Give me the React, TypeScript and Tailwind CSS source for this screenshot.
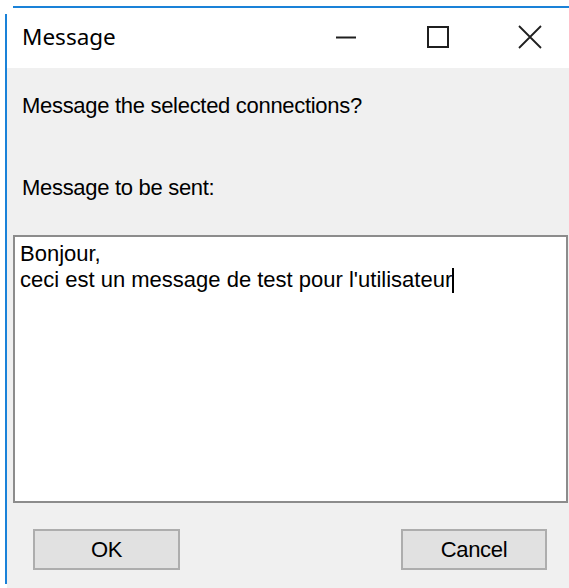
import React from "react";

const ACCENT = "bg-[#1a82d8]";

function MinimizeIcon() {
  return (
    <svg width="22" height="22" viewBox="0 0 22 22" fill="none">
      <path d="M1 11.5 H21" stroke="#1f1f1f" strokeWidth="2" />
    </svg>
  );
}

function MaximizeIcon() {
  return (
    <svg width="22" height="22" viewBox="0 0 22 22" fill="none">
      <rect x="1" y="1" width="20" height="20" stroke="#1f1f1f" strokeWidth="2" />
    </svg>
  );
}

function CloseIcon() {
  return (
    <svg width="24" height="24" viewBox="0 0 24 24" fill="none">
      <path d="M1 1 L23 23 M23 1 L1 23" stroke="#1f1f1f" strokeWidth="1.8" />
    </svg>
  );
}

function CaptionButton({ children }: { children: React.ReactNode }) {
  return <div className="w-[92px] h-[57px] flex items-center justify-center">{children}</div>;
}

function DialogButton({ label, className }: { label: string; className: string }) {
  return (
    <div
      className={
        "h-[41px] flex items-center justify-center bg-[#e1e1e1] border-2 border-[#adadad] text-[22px] leading-none tracking-[-0.3px] text-black " +
        className
      }
    >
      {label}
    </div>
  );
}

export default function App() {
  return (
    <div
      className="w-[569px] h-[588px] bg-white overflow-hidden flex flex-col"
      style={{ fontFamily: '"Liberation Sans", Arial, sans-serif' }}
    >
      <div className="h-[6px] shrink-0" />
      {/* window top edge */}
      <div className={"ml-[13px] h-[2px] shrink-0 " + ACCENT} />
      <div className="flex flex-1 min-h-0">
        {/* window left edge */}
        <div className={"ml-[5px] w-[2px] mt-[6px] mb-[4px] shrink-0 " + ACCENT} />
        <div className="w-[567px] shrink-0 flex flex-col">
          {/* title bar */}
          <div className="h-[60px] shrink-0 bg-white flex items-start justify-between">
            <div
              className="pl-[15px] pt-[18px] text-[22.5px] leading-none text-black"
              style={{ fontFamily: '"Noto Sans", "Open Sans", sans-serif' }}
            >
              Message
            </div>
            <div className="flex -mr-[2px]">
              <CaptionButton>
                <MinimizeIcon />
              </CaptionButton>
              <CaptionButton>
                <MaximizeIcon />
              </CaptionButton>
              <CaptionButton>
                <CloseIcon />
              </CaptionButton>
            </div>
          </div>
          {/* client area */}
          <div className="flex-1 bg-[#f0f0f0] flex flex-col text-black">
            <div className="pl-[15px] mt-[27px] text-[22px] leading-none tracking-[-0.3px]">
              Message the selected connections?
            </div>
            <div className="pl-[15px] mt-[60px] text-[22px] leading-none tracking-[-0.3px]">
              Message to be sent:
            </div>
            <div className="mx-[6px] mt-[36px] h-[268px] bg-white border-2 border-[#8c8c8c] px-[5px] pt-[4px] text-[22px] leading-[26px]">
              <div>Bonjour,</div>
              <div className="flex items-center">
                <span>ceci est un message de test pour l'utilisateur</span>
                <span className="inline-block w-[2px] h-[25px] bg-black" />
              </div>
            </div>
            <div className="mt-[26px] flex justify-between pl-[26px] pr-[27px]">
              <DialogButton label="OK" className="w-[147px]" />
              <DialogButton label="Cancel" className="w-[146px]" />
            </div>
          </div>
        </div>
      </div>
    </div>
  );
}
